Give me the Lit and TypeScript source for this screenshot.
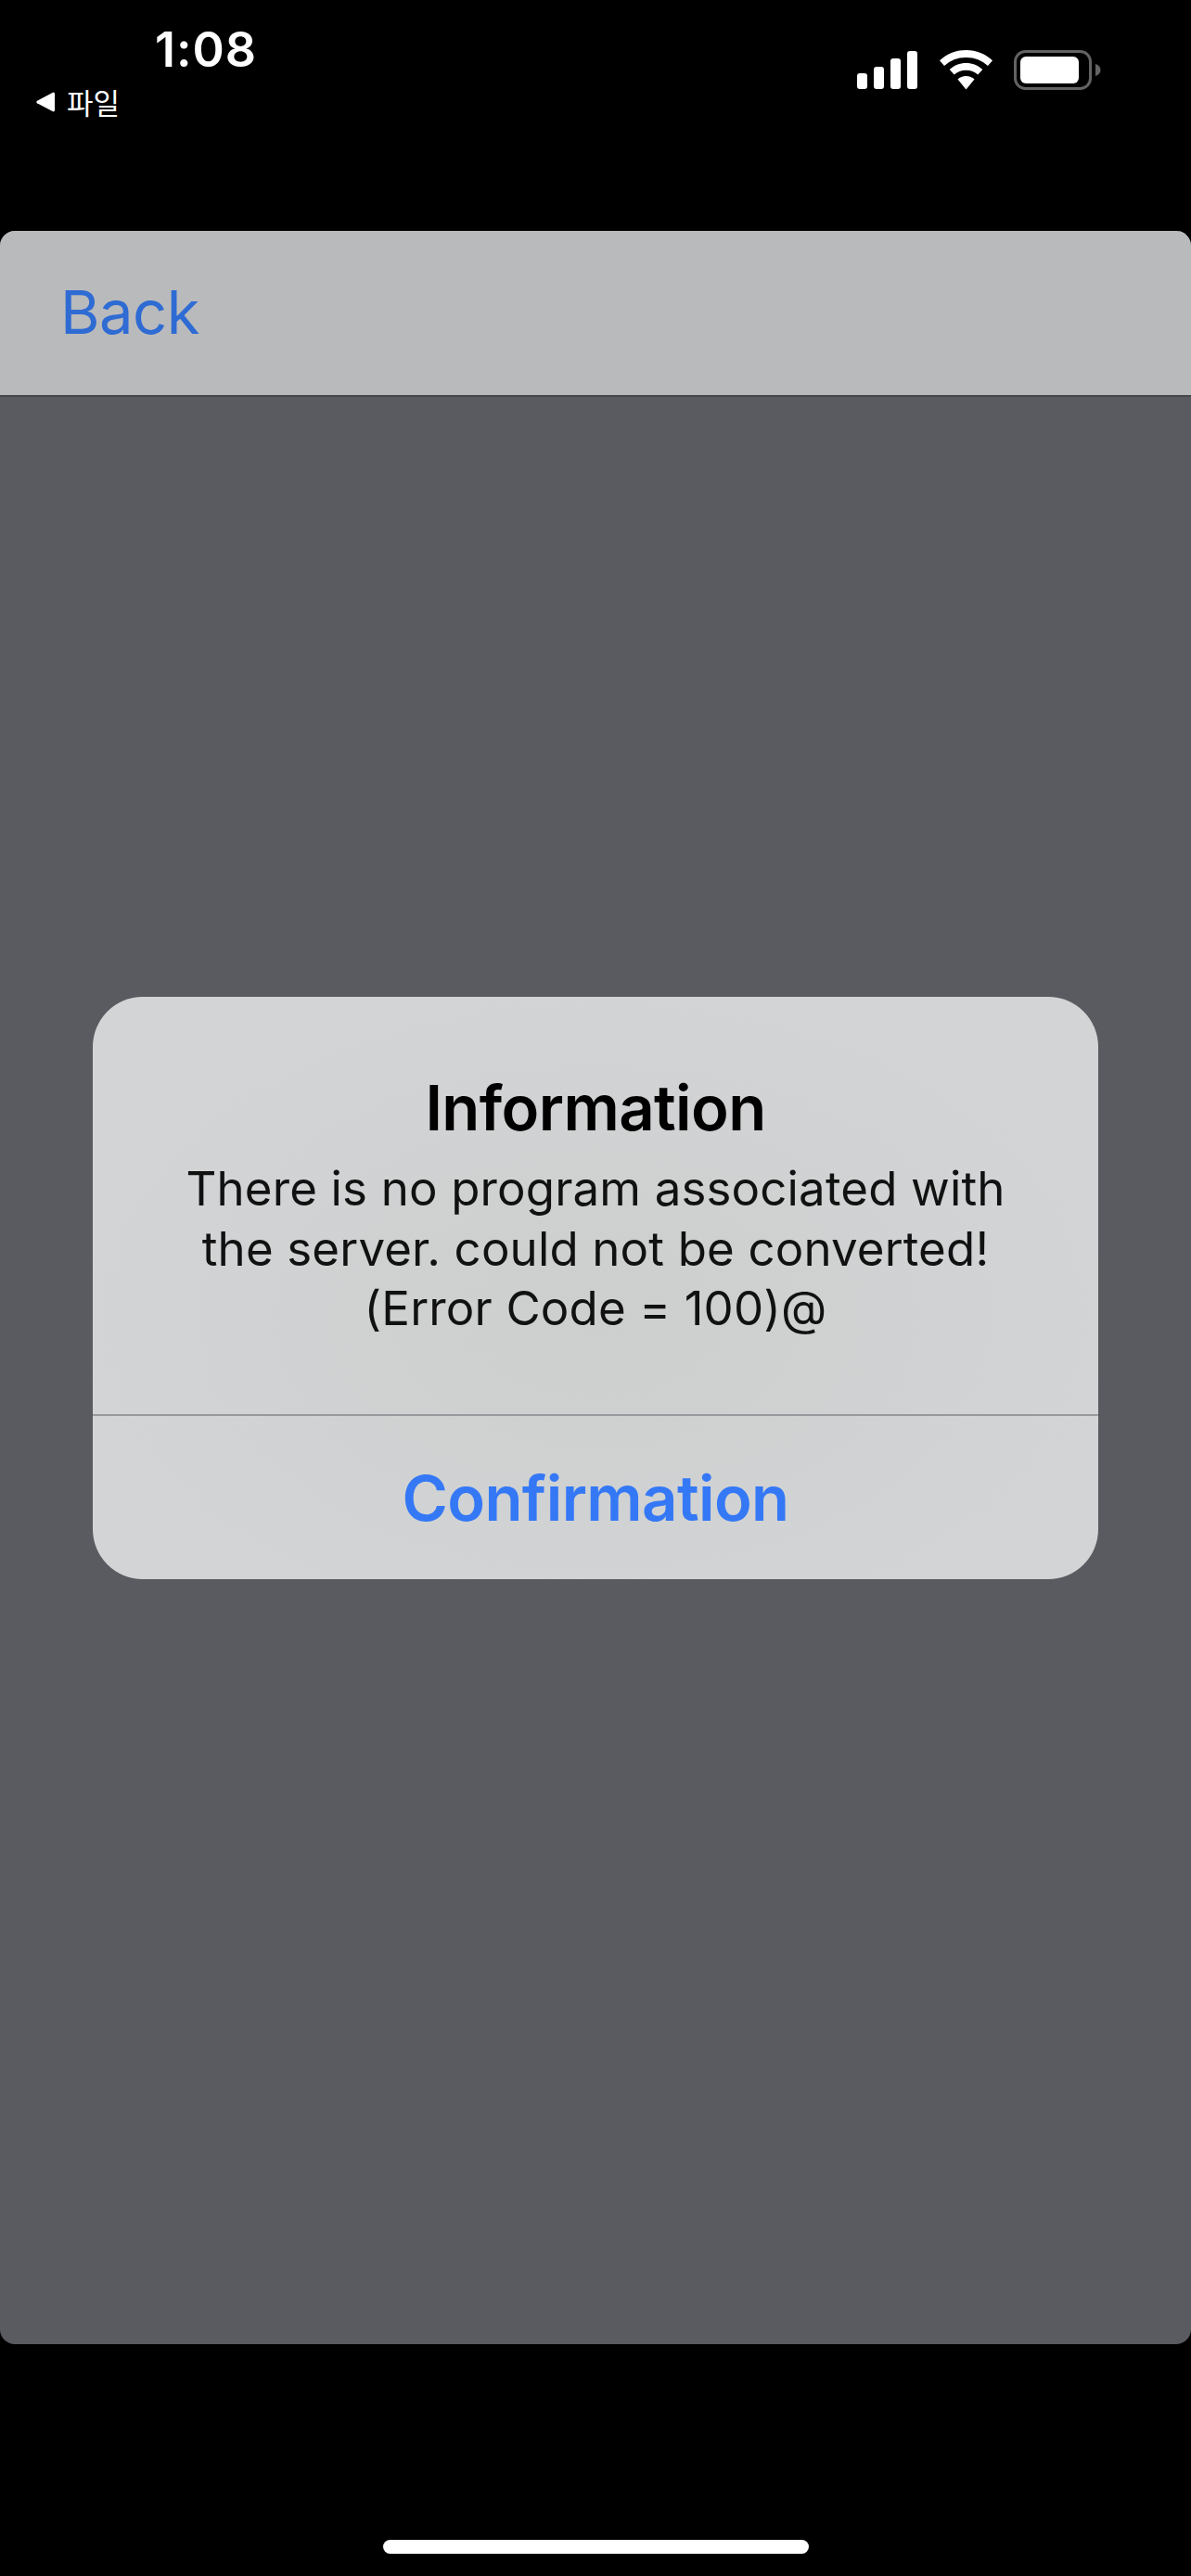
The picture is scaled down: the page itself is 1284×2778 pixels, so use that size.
import { LitElement, html, css } from 'lit';
import { customElement } from 'lit/decorators.js';

@customElement('app-root')
export class AppRoot extends LitElement {
  static styles = css`
    :host {
      display: flex;
      flex-direction: column;
      width: 1284px;
      height: 2778px;
      background: #000;
      font-family: Inter, 'Noto Sans CJK KR', sans-serif;
      overflow: hidden;
    }

    .status {
      height: 249px;
      box-sizing: border-box;
      display: flex;
      justify-content: space-between;
      align-items: flex-start;
      color: #fff;
    }

    .status-left {
      display: flex;
      flex-direction: column;
      padding: 23px 0 0 39px;
    }

    .time {
      margin-left: 128px;
      font-size: 52px;
      line-height: 62px;
      font-weight: 600;
      letter-spacing: 1px;
    }

    .crumb {
      display: flex;
      align-items: center;
      gap: 12px;
      height: 34px;
      margin-top: 8px;
    }

    .crumb-label {
      font-family: 'Noto Sans CJK KR', sans-serif;
      font-size: 31px;
      line-height: 34px;
    }

    .status-right {
      display: flex;
      align-items: flex-start;
      padding: 54px 97px 0 0;
      gap: 23px;
    }

    .status-right svg {
      display: block;
    }

    .panel {
      flex: none;
      height: 2279px;
      display: flex;
      flex-direction: column;
      background: #5a5b60;
      border-radius: 16px;
      overflow: hidden;
    }

    .nav {
      height: 179px;
      box-sizing: border-box;
      flex: none;
      display: flex;
      align-items: center;
      padding: 0 0 2px 65px;
      background: #b9babc;
      border-bottom: 2px solid #46474b;
    }

    .back {
      color: #2e6bd3;
      font-size: 65px;
      line-height: 78px;
      letter-spacing: -0.5px;
    }

    .content {
      flex: 1;
      padding: 647px 100px 0;
    }

    .dialog {
      display: flex;
      flex-direction: column;
      height: 628px;
      background: radial-gradient(ellipse at 50% 55%, #cdcfce 0%, #d2d4d6 75%);
      border-radius: 54px;
      overflow: hidden;
    }

    .body {
      height: 452px;
      box-sizing: border-box;
      flex: none;
      padding-top: 81px;
      text-align: center;
      color: #000;
      border-bottom: 2px solid #98999c;
    }

    .title {
      font-size: 67px;
      line-height: 78px;
      font-weight: 600;
      letter-spacing: -0.6px;
    }

    .message {
      margin-top: 16px;
      font-size: 51px;
      line-height: 64.500px;
      letter-spacing: 0.15px;
      color: #111;
    }

    .confirm {
      flex: 1;
      display: flex;
      align-items: center;
      justify-content: center;
      color: #3478f6;
      font-size: 67px;
      font-weight: 600;
      letter-spacing: -0.6px;
    }

    .footer {
      flex: 1;
      display: flex;
      justify-content: center;
      padding-top: 211px;
    }

    .home {
      width: 459px;
      height: 15px;
      border-radius: 8px;
      background: #fff;
    }
  `;

  render() {
    return html`
      <div class="status">
        <div class="status-left">
          <div class="time">1:08</div>
          <div class="crumb">
            <svg width="21" height="22" viewBox="0 0 21 22">
              <path d="M20 1.500v19l-1.500 1L1 12.200a1.400 1.400 0 0 1 0-2.400L18.500.5z" fill="#fff" />
            </svg>
            <span class="crumb-label">파일</span>
          </div>
        </div>
        <div class="status-right">
          <svg width="66" height="42" viewBox="0 0 66 42" fill="#fff">
            <rect x="0" y="25" width="11" height="17" rx="3" />
            <rect x="18" y="18" width="11" height="24" rx="3" />
            <rect x="36" y="9" width="11" height="33" rx="3" />
            <rect x="54" y="1" width="11" height="41" rx="3" />
          </svg>
          <svg width="57" height="43" viewBox="0 0 57 43" fill="#fff">
            <path d="M28.500 0C39.500 0 49.500 4.200 57 11.300l-5 5.700A34 34 0 0 0 28.500 8 34 34 0 0 0 5 17L0 11.300C7.500 4.200 17.500 0 28.500 0z" />
            <path d="M28.500 14c6.800 0 13 2.600 17.800 7l-5 5.500A19 19 0 0 0 28.500 21.800a19 19 0 0 0-12.800 4.700l-5-5.500c4.800-4.400 11-7 17.800-7z" />
            <path d="M28.500 28c3.500 0 6.700 1.300 9 3.500L28.500 42.500 19.500 31.500c2.300-2.200 5.500-3.500 9-3.500z" />
          </svg>
          <svg width="94" height="43" viewBox="0 0 94 43">
            <rect x="1.500" y="1.500" width="81" height="40" rx="11" fill="none" stroke="#636363" stroke-width="3" />
            <rect x="7" y="7" width="63" height="29" rx="6" fill="#fff" />
            <path d="M88 15c3.500 1 5.500 3.400 5.500 6.500S91.500 27 88 28z" fill="#636363" />
          </svg>
        </div>
      </div>
      <div class="panel">
        <div class="nav"><span class="back">Back</span></div>
        <div class="content">
          <div class="dialog">
            <div class="body">
              <div class="title">Information</div>
              <div class="message">
                There is no program associated with<br />
                the server. could not be converted!<br />
                (Error Code = 100)@
              </div>
            </div>
            <div class="confirm">Confirmation</div>
          </div>
        </div>
      </div>
      <div class="footer"><div class="home"></div></div>
    `;
  }
}

declare global {
  interface HTMLElementTagNameMap {
    'app-root': AppRoot;
  }
}
